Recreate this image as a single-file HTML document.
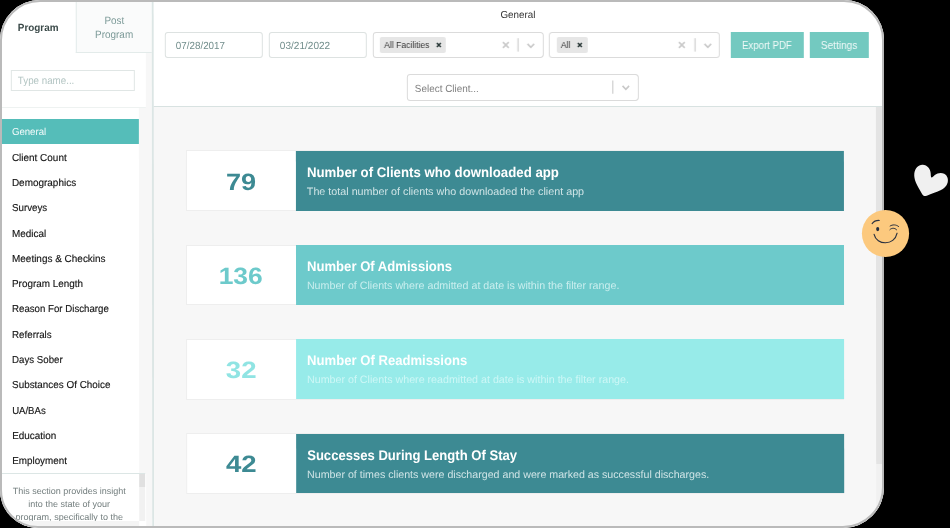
<!DOCTYPE html>
<html><head>
<meta charset="utf-8">
<style>
*{box-sizing:border-box;margin:0;padding:0}
html,body{width:950px;height:528px;overflow:hidden;background:#000}
body{font-family:"Liberation Sans",sans-serif;position:relative;color:#333}
.abs{position:absolute}
#clip{will-change:transform;position:absolute;left:0;top:0;width:884px;height:527.5px;border-radius:40px 40px 41px 38px;overflow:hidden;background:#fff}
#skew{position:absolute;left:0;top:0;width:884px;height:528px;transform:skewX(0.05deg);transform-origin:442px 264px}
#frameborder{position:absolute;left:0;top:0;width:884px;height:527.5px;border-radius:40px 40px 41px 38px;border:2px solid #bababa;pointer-events:none}
/* sidebar */
#sidebar{left:0;top:0;width:152.3px;height:528px;background:#fff}
#sbborder{left:152.3px;top:0;width:1.6px;height:528px;background:#dce6e5}
#strip1{left:145.6px;top:53px;width:6.7px;height:475px;background:#f7f7f7}
#strip2{left:138.9px;top:107.5px;width:8px;height:366px;background:#f7f7f7}
#tab1{left:1.5px;top:1.5px;width:74px;height:51px;font-weight:bold;font-size:10px;color:#3b4a49;text-align:center;line-height:51px}
#tab2{left:76px;top:0;width:76.3px;height:53px;background:#fafbfb;border-left:1px solid #e3ebea;border-bottom:1px solid #e3ebea;font-size:10px;color:#7c9a98;text-align:center;line-height:14.2px}
.tl{position:absolute;left:0;width:75px;height:14.2px;line-height:14.2px;text-align:center;white-space:nowrap}
#search{left:11.4px;top:70px;width:123.4px;height:20.5px;border:1px solid #e0e6e5;background:#fff;font-size:9.5px;color:#b3c5c3;line-height:19px;padding-left:6px}
#div1{left:0;top:107px;width:145.6px;height:1px;background:#eef2f1}
.mi{position:absolute;left:2px;width:136.9px;height:24.8px;line-height:26.2px;font-size:9.6px;color:#161616;-webkit-text-stroke:0.15px;padding-left:9.9px;white-space:nowrap}
.mi.act{background:#55bdb9;color:#f4fbfb;-webkit-text-stroke:0}
#div2{left:0;top:473px;width:145.4px;height:1px;background:#dce6e5}
#sbthumb{left:139.2px;top:474px;width:6.2px;height:13px;background:#e0e0e0}
#sbtrack{left:139.2px;top:487px;width:6.2px;height:34px;background:#f1f1f1}
#desc{left:1px;top:484.5px;width:136px;height:36.5px;overflow:hidden;font-size:9px;line-height:13px;color:#727d7d;text-align:center}
#sbbottom{left:0;top:521px;width:139.2px;height:8px;background:#f4f4f4}
/* header */
#header{left:153.9px;top:0;width:731px;height:106.3px;background:#fff}
#hborder{left:153.9px;top:106.3px;width:731px;height:1px;background:#d8e2e1}
#title{left:500.4px;top:8.6px;width:35px;font-size:10px;color:#333;text-align:center;line-height:12px;white-space:nowrap}
.inp{position:absolute;top:32.3px;height:25.4px;border:1px solid #dde2e1;border-radius:3px;background:#fff;font-size:9.8px;line-height:24px;padding-left:10.5px;padding-top:0.3px;color:#728e8c}
.sel{position:absolute;height:25.8px;border:1px solid #dbdbdb;border-radius:3.5px;background:#fff}
.tag{position:absolute;top:3.8px;height:16.2px;background:#e6e6e6;border-radius:2px;font-size:8.6px;color:#333;line-height:16.6px;padding-left:4.2px;white-space:nowrap}
.btn{position:absolute;top:32px;height:25.8px;background:#73c9c0;color:#f1faf8;font-size:9.8px;line-height:27.4px;text-align:center;white-space:nowrap}
/* content */
#content{left:153.9px;top:107.3px;width:731px;height:421px;background:#f7f7f7}
#cthumb{left:876px;top:107.3px;width:5.8px;height:357px;background:#e4e4e4}
#ctrack{left:876px;top:464.3px;width:5.8px;height:64px;background:#f1f1f1}
.card{position:absolute;left:186.4px;width:657.6px;height:61.3px;background:#fff;border:1px solid #eeeeee}
.card .num{position:absolute;left:0;top:0;width:108.6px;height:59.3px;text-align:center;font-weight:bold;font-size:23.6px;line-height:61.4px}
.card .num span{display:inline-block;position:relative;left:-0.7px;top:1.3px}
.card .body{position:absolute;left:108.6px;top:-0.5px;width:548px;height:60.6px}
.card .t{position:absolute;left:10.8px;top:13.7px;font-weight:bold;font-size:13px;color:#fff;white-space:nowrap;line-height:16px}
.card .s{position:absolute;left:10.9px;top:34.8px;font-size:10px;white-space:nowrap;line-height:13px}
</style>
</head>
<body>
<div id="clip"><div id="skew">
  <div class="abs" id="sidebar"></div>
  <div class="abs" id="strip1"></div>
  <div class="abs" id="strip2"></div>
  <div class="abs" id="tab1"><span style="display: inline-block; font-size: 10.4px; transform-origin: 50% 50%; transform: scaleX(0.9537);">Program</span></div>
  <div class="abs" id="tab2"><div class="tl" style="top:13.2px"><span style="display: inline-block; font-size: 10.6px; transform-origin: 50% 50%; transform: scaleX(0.9333);">Post</span></div><div class="tl" style="top:27.4px"><span style="display: inline-block; font-size: 10.6px; transform-origin: 50% 50%; transform: scaleX(0.9376);">Program</span></div></div>
  <div class="abs" id="search"><span style="display: inline-block; font-size: 10.6px; transform-origin: 0px 50%; transform: scaleX(0.9222);">Type name...</span></div>
  <div class="abs" id="div1"></div>
  <div class="mi act" style="top:119.0px"><span style="display: inline-block; font-size: 10.1px; transform-origin: 0px 50%; transform: scaleX(0.9542);">General</span></div>
  <div class="mi" style="top:144.6px"><span style="display: inline-block; font-size: 10.1px; transform-origin: 0px 50%; transform: scaleX(0.9861);">Client Count</span></div>
  <div class="mi" style="top:169.9px"><span style="display: inline-block; font-size: 10.1px; transform-origin: 0px 50%; transform: scaleX(0.9862);">Demographics</span></div>
  <div class="mi" style="top:195.2px"><span style="display: inline-block; font-size: 10.1px; transform-origin: 0px 50%; transform: scaleX(0.9673);">Surveys</span></div>
  <div class="mi" style="top:220.5px"><span style="display: inline-block; font-size: 10.1px; transform-origin: 0px 50%; transform: scaleX(0.9855);">Medical</span></div>
  <div class="mi" style="top:245.8px"><span style="display: inline-block; font-size: 10.1px; transform-origin: 0px 50%; transform: scaleX(0.987);">Meetings &amp; Checkins</span></div>
  <div class="mi" style="top:271.1px"><span style="display: inline-block; font-size: 10.1px; transform-origin: 0px 50%; transform: scaleX(0.9791);">Program Length</span></div>
  <div class="mi" style="top:296.4px"><span style="display: inline-block; font-size: 10.1px; transform-origin: 0px 50%; transform: scaleX(0.9583);">Reason For Discharge</span></div>
  <div class="mi" style="top:321.7px"><span style="display: inline-block; font-size: 10.1px; transform-origin: 0px 50%; transform: scaleX(0.9664);">Referrals</span></div>
  <div class="mi" style="top:347.0px"><span style="display: inline-block; font-size: 10.1px; transform-origin: 0px 50%; transform: scaleX(0.9588);">Days Sober</span></div>
  <div class="mi" style="top:372.3px"><span style="display: inline-block; font-size: 10.1px; transform-origin: 0px 50%; transform: scaleX(0.9785);">Substances Of Choice</span></div>
  <div class="mi" style="top:397.6px"><span style="display: inline-block; font-size: 10.1px; transform-origin: 0px 50%; transform: scaleX(0.95);">UA/BAs</span></div>
  <div class="mi" style="top:422.9px"><span style="display: inline-block; font-size: 10.1px; transform-origin: 0px 50%; transform: scaleX(0.9838);">Education</span></div>
  <div class="mi" style="top:448.2px"><span style="display: inline-block; font-size: 10.1px; transform-origin: 0px 50%; transform: scaleX(0.9763);">Employment</span></div>
  <div class="abs" id="div2"></div>
  <div class="abs" id="sbthumb"></div>
  <div class="abs" id="sbtrack"></div>
  <div class="abs" id="desc"><span style="font-size: 9.007px;">This section provides insight</span><br><span style="font-size: 9.026px;">into the state of your</span><br><span style="font-size: 9.052px;">program, specifically to the</span><br>general</div>
  <div class="abs" id="sbbottom"></div>
  <div class="abs" id="sbborder"></div>

  <div class="abs" id="header"></div>
  <div class="abs" id="hborder"></div>
  <div class="abs" id="title"><span style="display: inline-block; font-size: 10.2px; transform-origin: 50% 50%; transform: scaleX(0.9652);">General</span></div>
  <div class="inp" style="left:164.7px;width:98px"><span style="display: inline-block; font-size: 10.3px; transform-origin: 0px 50%; transform: scaleX(0.9541);">07/28/2017</span></div>
  <div class="inp" style="left:268.7px;width:98px"><span style="display: inline-block; font-size: 10.3px; transform-origin: 0px 50%; transform: scaleX(0.9774);">03/21/2022</span></div>

  <div class="sel" style="left:372.5px;top:32.1px;width:171.1px">
    <div class="tag" style="left:6.6px;width:66.2px">All Facilities<svg style="position:absolute;left:56.1px;top:5.4px" width="6" height="6" viewBox="0 0 6 6"><path d="M1 1L5 5M5 1L1 5" stroke="#243332" stroke-width="1.45" fill="none"></path></svg></div>
    <svg style="position:absolute;left:128.2px;top:8.1px" width="8" height="8" viewBox="0 0 8 8"><path d="M1.1 1.1L6.9 6.9M6.9 1.1L1.1 6.9" stroke="#cacaca" stroke-width="1.6" fill="none"></path></svg>
    <svg style="position:absolute;left:142.6px;top:5px" width="5" height="14" viewBox="0 0 5 14"><rect x="1.55" y="0.2" width="1.5" height="13.4" fill="#d8d8d8"></rect></svg>
    <svg style="position:absolute;left:153.8px;top:9.9px" width="8" height="6" viewBox="0 0 8 6"><path d="M0.7 0.9L4 4.3L7.3 0.9" stroke="#c9c9c9" stroke-width="1.6" fill="none"></path></svg>
  </div>

  <div class="sel" style="left:549.3px;top:32.1px;width:170.6px">
    <div class="tag" style="left:6.6px;width:30.8px">All<svg style="position:absolute;left:20.6px;top:5.4px" width="6" height="6" viewBox="0 0 6 6"><path d="M1 1L5 5M5 1L1 5" stroke="#243332" stroke-width="1.45" fill="none"></path></svg></div>
    <svg style="position:absolute;left:128.2px;top:8.1px" width="8" height="8" viewBox="0 0 8 8"><path d="M1.1 1.1L6.9 6.9M6.9 1.1L1.1 6.9" stroke="#cacaca" stroke-width="1.6" fill="none"></path></svg>
    <svg style="position:absolute;left:142.6px;top:5px" width="5" height="14" viewBox="0 0 5 14"><rect x="1.55" y="0.2" width="1.5" height="13.4" fill="#d8d8d8"></rect></svg>
    <svg style="position:absolute;left:153.8px;top:9.9px" width="8" height="6" viewBox="0 0 8 6"><path d="M0.7 0.9L4 4.3L7.3 0.9" stroke="#c9c9c9" stroke-width="1.6" fill="none"></path></svg>
  </div>

  <div class="btn" style="left:731.1px;width:72.8px"><span style="display: inline-block; font-size: 10.1px; transform-origin: 50% 50%; transform: scaleX(0.9541);">Export PDF</span></div>
  <div class="btn" style="left:809.5px;width:59.4px"><span style="display: inline-block; font-size: 10.1px; transform-origin: 50% 50%; transform: scaleX(0.997);">Settings</span></div>

  <div class="sel" style="left:407px;top:74.4px;width:231.7px;height:26.8px">
    <div style="position:absolute;left:6.9px;top:1.3px;font-size:9.8px;color:#808080;line-height:24px;white-space:nowrap"><span style="display: inline-block; font-size: 10.3px; transform-origin: 0px 50%; transform: scaleX(0.9637);">Select Client...</span></div>
    <svg style="position:absolute;left:202px;top:5px" width="5" height="14" viewBox="0 0 5 14"><rect x="2.15" y="0.5" width="1.5" height="13.2" fill="#d8d8d8"></rect></svg>
    <svg style="position:absolute;left:213.6px;top:9.7px" width="8" height="6" viewBox="0 0 8 6"><path d="M0.7 0.9L4 4.3L7.3 0.9" stroke="#c9c9c9" stroke-width="1.6" fill="none"></path></svg>
  </div>

  <div class="abs" id="content"></div>
  <div class="abs" id="cthumb"></div>
  <div class="abs" id="ctrack"></div>

  <div class="card" style="top:150.2px">
    <div class="num" style="color:#3d8a93"><span style="transform:scaleX(1.15)">79</span></div>
    <div class="body" style="background:#3d8a93"><div class="t"><span style="display: inline-block; font-size: 14px; transform-origin: 0px 50%; transform: scaleX(0.9445);">Number of Clients who downloaded app</span></div><div class="s" style="color:#cfe4e6"><span style="font-size: 10.75px;">The total number of clients who downloaded the client app</span></div></div>
  </div>
  <div class="card" style="top:244.9px;height:60.6px">
    <div class="num" style="color:#6dcacb"><span style="top:0.5px;transform:scaleX(1.12)">136</span></div>
    <div class="body" style="height:59.6px;background:#6dcacb"><div class="t" style="top:12.9px"><span style="display: inline-block; font-size: 14px; transform-origin: 0px 50%; transform: scaleX(0.9357);">Number Of Admissions</span></div><div class="s" style="color:#c9eeee;top:34.0px"><span style="font-size: 10.693px;">Number of Clients where admitted at date is within the filter range.</span></div></div>
  </div>
  <div class="card" style="top:338.5px;height:61.1px">
    <div class="num" style="color:#90e4e3"><span style="top:0.8px;transform:scaleX(1.17)">32</span></div>
    <div class="body" style="height:60.4px;background:#97ebe9"><div class="t" style="top:13.2px"><span style="display: inline-block; font-size: 14px; transform-origin: 0px 50%; transform: scaleX(0.9359);">Number Of Readmissions</span></div><div class="s" style="color:#cdf7f6;top:34.3px"><span style="font-size: 10.692px;">Number of Clients where readmitted at date is within the filter range.</span></div></div>
  </div>
  <div class="card" style="top:433px;height:60.5px">
    <div class="num" style="color:#3d8a93"><span style="top:-0.2px;transform:scaleX(1.17)">42</span></div>
    <div class="body" style="height:59.5px;background:#3d8a93"><div class="t" style="top:13.0px"><span style="display: inline-block; font-size: 14px; transform-origin: 0px 50%; transform: scaleX(0.9335);">Successes During Length Of Stay</span></div><div class="s" style="color:#cfe4e6;top:34.1px"><span style="font-size: 10.67px;">Number of times clients were discharged and were marked as successful discharges.</span></div></div>
  </div>
</div></div>
<div id="frameborder"></div>

<!-- heart -->
<svg class="abs" style="left:905px;top:155px" width="45" height="45" viewBox="905 155 45 45">
  <path d="M924.3 196.1 C922.9 195.9 921.6 193.2 919.8 190 C916.8 184.8 913.7 179.6 914.3 173.6 C914.9 168.5 918.4 164.6 922.7 164.8 C927.4 165 930.5 169 930.7 173.4 C930.8 175.4 930.8 177 931.5 177.4 C932.3 177.7 933.2 176.3 934.8 175 C937.5 172.9 941.2 172.2 944.2 173.8 C947.4 175.5 948.6 179.2 947.6 182.8 C946.6 186.3 943.8 188.8 940.5 190.3 C936 192.4 931 194.1 927.4 195.4 C926.2 195.8 925.2 196.2 924.3 196.1 Z" fill="#f0f0f0"></path>
</svg>

<!-- emoji -->
<svg class="abs" style="left:860px;top:208px" width="52" height="52" viewBox="860 208 52 52">
  <circle cx="885.5" cy="233.5" r="23.6" fill="#fcc97e"></circle>
  <path d="M872.1 223.6 C873.5 221.6 876.5 220.3 879.3 220.4" stroke="#2a3140" stroke-width="1.05" fill="none" stroke-linecap="round"></path>
  <ellipse cx="877.7" cy="229.1" rx="1.55" ry="2.05" fill="#232b3b"></ellipse>
  <path d="M890.1 226 C892.5 224.4 896 224.4 898.6 226.5" stroke="#2a3140" stroke-width="1" fill="none" stroke-linecap="round"></path>
  <path d="M889.9 229.6 C891.5 227.8 894.8 227.6 896.6 229.8" stroke="#2a3140" stroke-width="1" fill="none" stroke-linecap="round"></path>
  <path d="M874.1 234.4 C876.5 245.5 894.5 246 897.1 233.2" stroke="#2a3140" stroke-width="1.15" fill="none" stroke-linecap="round"></path>
</svg>


</body></html>
